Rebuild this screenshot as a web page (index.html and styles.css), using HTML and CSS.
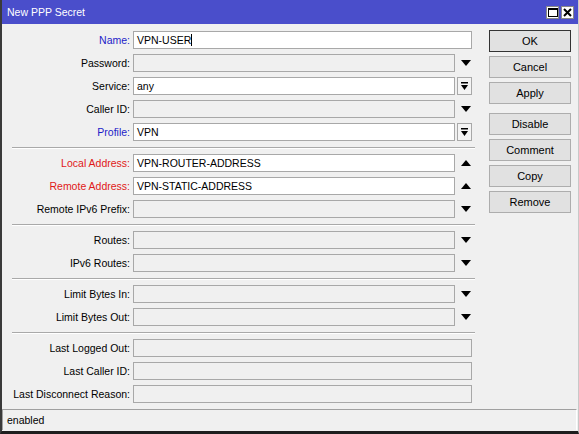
FILE: index.html
```html
<!DOCTYPE html>
<html>
<head>
<meta charset="utf-8">
<link rel="stylesheet" href="styles.css">
</head>
<body>
<div class="window">
  <div class="titlebar">
    <span class="title">New PPP Secret</span>
    <div class="tb-btns">
      <span class="tb-btn"><svg width="10" height="9" viewBox="0 0 10 9"><rect x="0.5" y="0.5" width="9" height="8" fill="none" stroke="#000" stroke-width="1"/><rect x="0" y="0" width="10" height="2" fill="#000"/></svg></span>
      <span class="tb-btn"><svg width="9" height="9" viewBox="0 0 9 9"><path d="M1 1 L8 8 M8 1 L1 8" stroke="#000" stroke-width="2"/></svg></span>
    </div>
  </div>
  <div class="content">
    <div class="form">
      <div class="section">
        <div class="row"><label class="blue">Name:</label><div class="field white wide">VPN-USER<span class="caret"></span></div></div>
        <div class="row"><label>Password:</label><div class="field"></div><span class="arrow"><svg width="10" height="6" viewBox="0 0 10 6"><polygon points="0,0 10,0 5,6" fill="#000"/></svg></span></div>
        <div class="row"><label>Service:</label><div class="field white">any</div><span class="minibtn"><svg width="7" height="8" viewBox="0 0 7 8"><rect x="0" y="0" width="7" height="1.5" fill="#000"/><polygon points="0,3 7,3 3.5,8" fill="#000"/></svg></span></div>
        <div class="row"><label>Caller ID:</label><div class="field"></div><span class="arrow"><svg width="10" height="6" viewBox="0 0 10 6"><polygon points="0,0 10,0 5,6" fill="#000"/></svg></span></div>
        <div class="row"><label class="blue">Profile:</label><div class="field white">VPN</div><span class="minibtn"><svg width="7" height="8" viewBox="0 0 7 8"><rect x="0" y="0" width="7" height="1.5" fill="#000"/><polygon points="0,3 7,3 3.5,8" fill="#000"/></svg></span></div>
      </div>
      <div class="sep"></div>
      <div class="section">
        <div class="row"><label class="red">Local Address:</label><div class="field white">VPN-ROUTER-ADDRESS</div><span class="arrow"><svg width="10" height="6" viewBox="0 0 10 6"><polygon points="0,6 10,6 5,0" fill="#000"/></svg></span></div>
        <div class="row"><label class="red">Remote Address:</label><div class="field white">VPN-STATIC-ADDRESS</div><span class="arrow"><svg width="10" height="6" viewBox="0 0 10 6"><polygon points="0,6 10,6 5,0" fill="#000"/></svg></span></div>
        <div class="row"><label>Remote IPv6 Prefix:</label><div class="field"></div><span class="arrow"><svg width="10" height="6" viewBox="0 0 10 6"><polygon points="0,0 10,0 5,6" fill="#000"/></svg></span></div>
      </div>
      <div class="sep"></div>
      <div class="section">
        <div class="row"><label>Routes:</label><div class="field"></div><span class="arrow"><svg width="10" height="6" viewBox="0 0 10 6"><polygon points="0,0 10,0 5,6" fill="#000"/></svg></span></div>
        <div class="row"><label>IPv6 Routes:</label><div class="field"></div><span class="arrow"><svg width="10" height="6" viewBox="0 0 10 6"><polygon points="0,0 10,0 5,6" fill="#000"/></svg></span></div>
      </div>
      <div class="sep"></div>
      <div class="section">
        <div class="row"><label>Limit Bytes In:</label><div class="field"></div><span class="arrow"><svg width="10" height="6" viewBox="0 0 10 6"><polygon points="0,0 10,0 5,6" fill="#000"/></svg></span></div>
        <div class="row"><label>Limit Bytes Out:</label><div class="field"></div><span class="arrow"><svg width="10" height="6" viewBox="0 0 10 6"><polygon points="0,0 10,0 5,6" fill="#000"/></svg></span></div>
      </div>
      <div class="sep"></div>
      <div class="section">
        <div class="row"><label>Last Logged Out:</label><div class="field wide"></div></div>
        <div class="row"><label>Last Caller ID:</label><div class="field wide"></div></div>
        <div class="row"><label>Last Disconnect Reason:</label><div class="field wide"></div></div>
      </div>
    </div>
    <div class="buttons">
      <div class="group">
        <button class="btn default">OK</button>
        <button class="btn">Cancel</button>
        <button class="btn">Apply</button>
      </div>
      <div class="group">
        <button class="btn">Disable</button>
        <button class="btn">Comment</button>
        <button class="btn">Copy</button>
        <button class="btn">Remove</button>
      </div>
    </div>
  </div>
  <div class="status">enabled</div>
</div>
</body>
</html>
```
FILE: styles.css
```css
* { box-sizing: border-box; }
html, body { margin: 0; padding: 0; }
body {
  width: 579px;
  height: 434px;
  overflow: hidden;
  background: #f0f0f0;
  font-family: "Liberation Sans", Arial, sans-serif;
  font-size: 10.5px;
  color: #000;
}
.window {
  width: 579px;
  height: 434px;
  background: #f0f0f0;
  border-left: 2px solid #3a3a3a;
  border-right: 1px solid #c8c8c8;
  border-bottom: 3px solid #1e1e1e;
  display: flex;
  flex-direction: column;
}
.titlebar {
  height: 24px;
  background: #4a4ecb;
  color: #fff;
  display: flex;
  align-items: center;
  justify-content: space-between;
  padding: 0 4px 0 5px;
  flex: none;
}
.title { font-size: 10.5px; }
.tb-btns { display: flex; gap: 2px; }
.tb-btn {
  width: 13px;
  height: 13px;
  background: #fff;
  border: 1px solid #888;
  display: flex;
  align-items: center;
  justify-content: center;
}
.content {
  display: flex;
  gap: 16px;
  padding-top: 7px;
  flex: 1;
}
.form { width: 471px; display: flex; flex-direction: column; }
.section { display: flex; flex-direction: column; gap: 5px; }
.row {
  display: grid;
  grid-template-columns: 128px 322px 14px;
  column-gap: 3px;
  height: 18px;
  align-items: center;
}
.row label { text-align: right; white-space: nowrap; }
.row label.blue { color: #1c1cc8; }
.row label.red { color: #e01818; }
.field {
  height: 18px;
  border: 1px solid #a8a8a8;
  background: #f0f0f0;
  padding: 0 3px;
  line-height: 16px;
  color: #000;
  white-space: nowrap;
  overflow: hidden;
}
.field.white { background: #fff; }
.field.wide { grid-column: 2 / 4; }
.caret {
  display: inline-block;
  width: 1px;
  height: 12px;
  background: #000;
  vertical-align: -2px;
}
.arrow { display: flex; justify-content: center; align-items: center; padding-left: 1px; }
.minibtn {
  width: 15px;
  height: 18px;
  margin-left: -1px;
  border: 1px solid #a8a8a8;
  background: #f4f4f4;
  display: flex;
  align-items: center;
  justify-content: center;
}
.sep {
  margin: 6px 0 5px 10px;
  height: 2px;
  border-top: 1px solid #a9a9a9;
  border-bottom: 1px solid #ffffff;
  width: 463px;
}
.buttons { display: flex; flex-direction: column; gap: 9px; margin-top: -1px; }
.group { display: flex; flex-direction: column; gap: 4px; }
.btn {
  width: 82px;
  height: 22px;
  font-family: "Liberation Sans", Arial, sans-serif;
  font-size: 11px;
  color: #000;
  background: #e1e1e1;
  border: 1px solid #adadad;
  padding: 0;
  margin: 0;
}
.btn.default { border: 1px solid #333; }
.status {
  margin: 0 1px 1px 0;
  height: 21px;
  border-top: 1px solid #a0a0a0;
  border-left: 1px solid #a0a0a0;
  border-right: 1px solid #fff;
  padding-left: 4px;
  line-height: 20px;
  flex: none;
}
```
